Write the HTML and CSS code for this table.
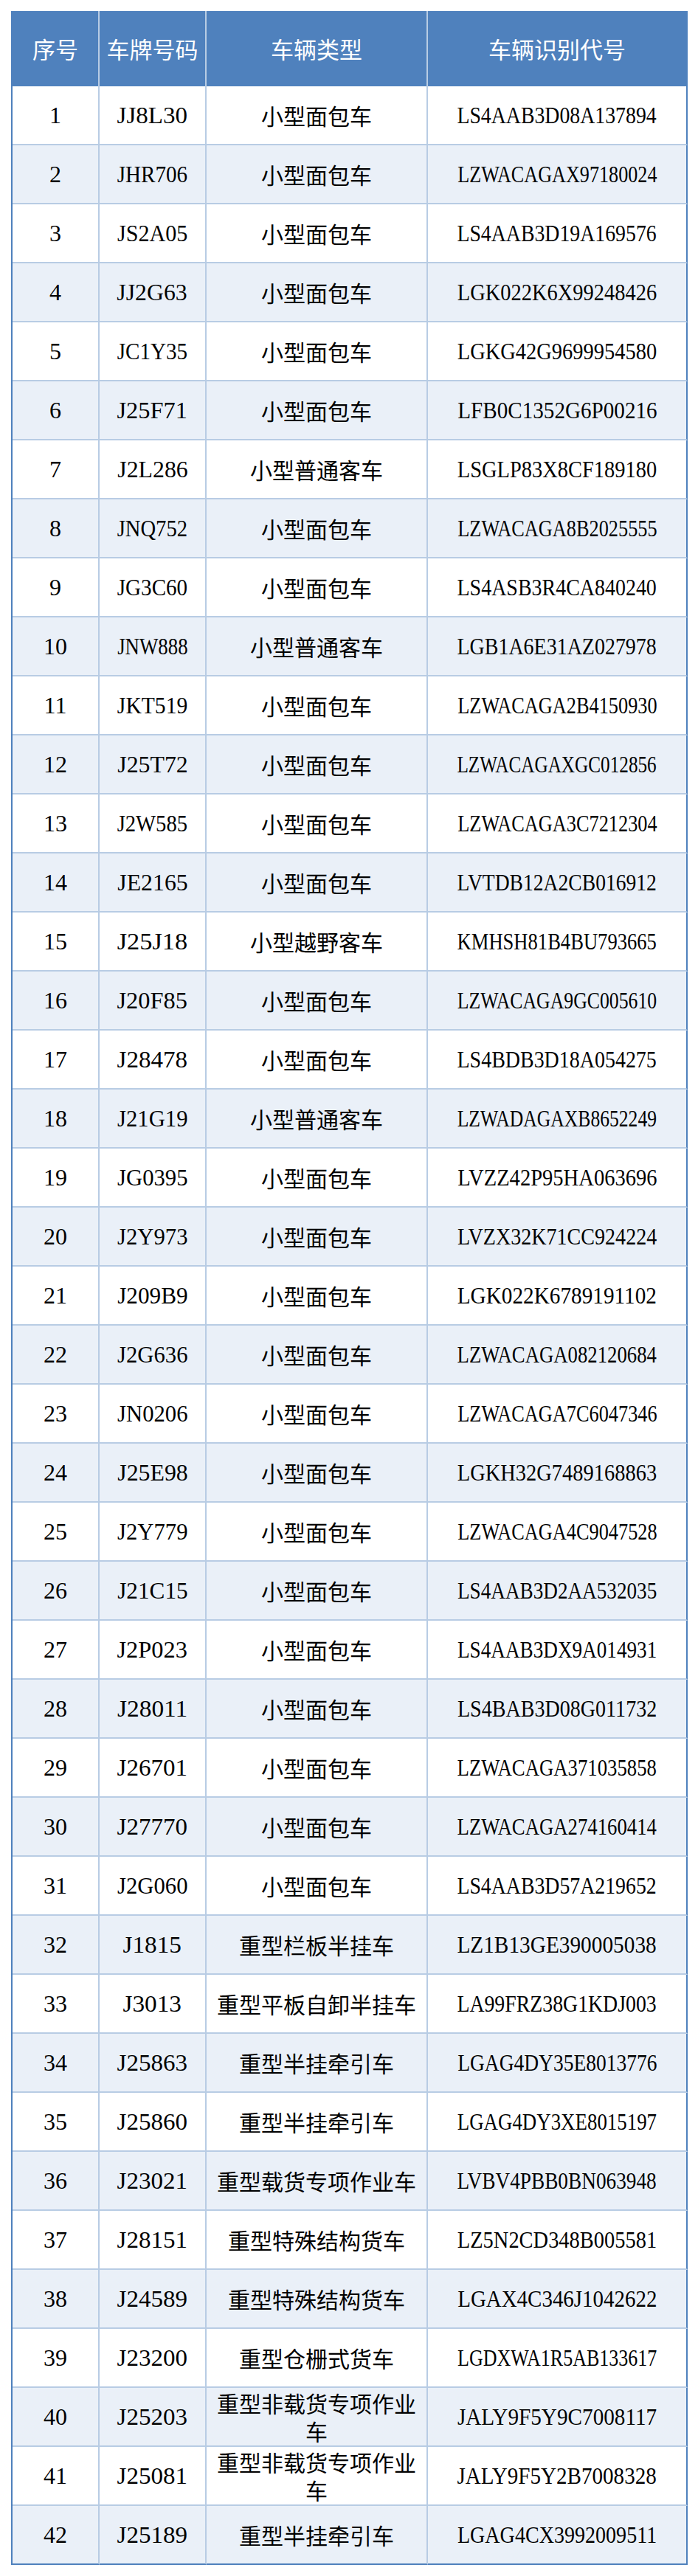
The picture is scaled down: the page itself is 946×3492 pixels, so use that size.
FILE: index.html
```html
<!DOCTYPE html>
<html lang="zh-CN">
<head>
<meta charset="utf-8">
<title>车辆信息表</title>
<link rel="stylesheet" href="styles.css">
</head>
<body>
<table class="vt">
<colgroup><col class="c1"><col class="c2"><col class="c3"><col class="c4"></colgroup>
<thead>
<tr><th>序号</th><th>车牌号码</th><th>车辆类型</th><th>车辆识别代号</th></tr>
</thead>
<tbody>
<tr><td class="n">1</td><td class="n"><span class="fit">JJ8L30</span></td><td class="t">小型面包车</td><td class="n"><span class="fit">LS4AAB3D08A137894</span></td></tr>
<tr><td class="n">2</td><td class="n"><span class="fit">JHR706</span></td><td class="t">小型面包车</td><td class="n"><span class="fit">LZWACAGAX97180024</span></td></tr>
<tr><td class="n">3</td><td class="n"><span class="fit">JS2A05</span></td><td class="t">小型面包车</td><td class="n"><span class="fit">LS4AAB3D19A169576</span></td></tr>
<tr><td class="n">4</td><td class="n"><span class="fit">JJ2G63</span></td><td class="t">小型面包车</td><td class="n"><span class="fit">LGK022K6X99248426</span></td></tr>
<tr><td class="n">5</td><td class="n"><span class="fit">JC1Y35</span></td><td class="t">小型面包车</td><td class="n"><span class="fit">LGKG42G9699954580</span></td></tr>
<tr><td class="n">6</td><td class="n"><span class="fit">J25F71</span></td><td class="t">小型面包车</td><td class="n"><span class="fit">LFB0C1352G6P00216</span></td></tr>
<tr><td class="n">7</td><td class="n"><span class="fit">J2L286</span></td><td class="t">小型普通客车</td><td class="n"><span class="fit">LSGLP83X8CF189180</span></td></tr>
<tr><td class="n">8</td><td class="n"><span class="fit">JNQ752</span></td><td class="t">小型面包车</td><td class="n"><span class="fit">LZWACAGA8B2025555</span></td></tr>
<tr><td class="n">9</td><td class="n"><span class="fit">JG3C60</span></td><td class="t">小型面包车</td><td class="n"><span class="fit">LS4ASB3R4CA840240</span></td></tr>
<tr><td class="n">10</td><td class="n"><span class="fit">JNW888</span></td><td class="t">小型普通客车</td><td class="n"><span class="fit">LGB1A6E31AZ027978</span></td></tr>
<tr><td class="n">11</td><td class="n"><span class="fit">JKT519</span></td><td class="t">小型面包车</td><td class="n"><span class="fit">LZWACAGA2B4150930</span></td></tr>
<tr><td class="n">12</td><td class="n"><span class="fit">J25T72</span></td><td class="t">小型面包车</td><td class="n"><span class="fit">LZWACAGAXGC012856</span></td></tr>
<tr><td class="n">13</td><td class="n"><span class="fit">J2W585</span></td><td class="t">小型面包车</td><td class="n"><span class="fit">LZWACAGA3C7212304</span></td></tr>
<tr><td class="n">14</td><td class="n"><span class="fit">JE2165</span></td><td class="t">小型面包车</td><td class="n"><span class="fit">LVTDB12A2CB016912</span></td></tr>
<tr><td class="n">15</td><td class="n"><span class="fit">J25J18</span></td><td class="t">小型越野客车</td><td class="n"><span class="fit">KMHSH81B4BU793665</span></td></tr>
<tr><td class="n">16</td><td class="n"><span class="fit">J20F85</span></td><td class="t">小型面包车</td><td class="n"><span class="fit">LZWACAGA9GC005610</span></td></tr>
<tr><td class="n">17</td><td class="n"><span class="fit">J28478</span></td><td class="t">小型面包车</td><td class="n"><span class="fit">LS4BDB3D18A054275</span></td></tr>
<tr><td class="n">18</td><td class="n"><span class="fit">J21G19</span></td><td class="t">小型普通客车</td><td class="n"><span class="fit">LZWADAGAXB8652249</span></td></tr>
<tr><td class="n">19</td><td class="n"><span class="fit">JG0395</span></td><td class="t">小型面包车</td><td class="n"><span class="fit">LVZZ42P95HA063696</span></td></tr>
<tr><td class="n">20</td><td class="n"><span class="fit">J2Y973</span></td><td class="t">小型面包车</td><td class="n"><span class="fit">LVZX32K71CC924224</span></td></tr>
<tr><td class="n">21</td><td class="n"><span class="fit">J209B9</span></td><td class="t">小型面包车</td><td class="n"><span class="fit">LGK022K6789191102</span></td></tr>
<tr><td class="n">22</td><td class="n"><span class="fit">J2G636</span></td><td class="t">小型面包车</td><td class="n"><span class="fit">LZWACAGA082120684</span></td></tr>
<tr><td class="n">23</td><td class="n"><span class="fit">JN0206</span></td><td class="t">小型面包车</td><td class="n"><span class="fit">LZWACAGA7C6047346</span></td></tr>
<tr><td class="n">24</td><td class="n"><span class="fit">J25E98</span></td><td class="t">小型面包车</td><td class="n"><span class="fit">LGKH32G7489168863</span></td></tr>
<tr><td class="n">25</td><td class="n"><span class="fit">J2Y779</span></td><td class="t">小型面包车</td><td class="n"><span class="fit">LZWACAGA4C9047528</span></td></tr>
<tr><td class="n">26</td><td class="n"><span class="fit">J21C15</span></td><td class="t">小型面包车</td><td class="n"><span class="fit">LS4AAB3D2AA532035</span></td></tr>
<tr><td class="n">27</td><td class="n"><span class="fit">J2P023</span></td><td class="t">小型面包车</td><td class="n"><span class="fit">LS4AAB3DX9A014931</span></td></tr>
<tr><td class="n">28</td><td class="n"><span class="fit">J28011</span></td><td class="t">小型面包车</td><td class="n"><span class="fit">LS4BAB3D08G011732</span></td></tr>
<tr><td class="n">29</td><td class="n"><span class="fit">J26701</span></td><td class="t">小型面包车</td><td class="n"><span class="fit">LZWACAGA371035858</span></td></tr>
<tr><td class="n">30</td><td class="n"><span class="fit">J27770</span></td><td class="t">小型面包车</td><td class="n"><span class="fit">LZWACAGA274160414</span></td></tr>
<tr><td class="n">31</td><td class="n"><span class="fit">J2G060</span></td><td class="t">小型面包车</td><td class="n"><span class="fit">LS4AAB3D57A219652</span></td></tr>
<tr><td class="n">32</td><td class="n"><span class="fit">J1815</span></td><td class="t">重型栏板半挂车</td><td class="n"><span class="fit">LZ1B13GE390005038</span></td></tr>
<tr><td class="n">33</td><td class="n"><span class="fit">J3013</span></td><td class="t">重型平板自卸半挂车</td><td class="n"><span class="fit">LA99FRZ38G1KDJ003</span></td></tr>
<tr><td class="n">34</td><td class="n"><span class="fit">J25863</span></td><td class="t">重型半挂牵引车</td><td class="n"><span class="fit">LGAG4DY35E8013776</span></td></tr>
<tr><td class="n">35</td><td class="n"><span class="fit">J25860</span></td><td class="t">重型半挂牵引车</td><td class="n"><span class="fit">LGAG4DY3XE8015197</span></td></tr>
<tr><td class="n">36</td><td class="n"><span class="fit">J23021</span></td><td class="t">重型载货专项作业车</td><td class="n"><span class="fit">LVBV4PBB0BN063948</span></td></tr>
<tr><td class="n">37</td><td class="n"><span class="fit">J28151</span></td><td class="t">重型特殊结构货车</td><td class="n"><span class="fit">LZ5N2CD348B005581</span></td></tr>
<tr><td class="n">38</td><td class="n"><span class="fit">J24589</span></td><td class="t">重型特殊结构货车</td><td class="n"><span class="fit">LGAX4C346J1042622</span></td></tr>
<tr><td class="n">39</td><td class="n"><span class="fit">J23200</span></td><td class="t">重型仓栅式货车</td><td class="n"><span class="fit">LGDXWA1R5AB133617</span></td></tr>
<tr><td class="n">40</td><td class="n"><span class="fit">J25203</span></td><td class="t">重型非载货专项作业车</td><td class="n"><span class="fit">JALY9F5Y9C7008117</span></td></tr>
<tr><td class="n">41</td><td class="n"><span class="fit">J25081</span></td><td class="t">重型非载货专项作业车</td><td class="n"><span class="fit">JALY9F5Y2B7008328</span></td></tr>
<tr><td class="n">42</td><td class="n"><span class="fit">J25189</span></td><td class="t">重型半挂牵引车</td><td class="n"><span class="fit">LGAG4CX3992009511</span></td></tr>
</tbody>
</table>
<script src="script.js"></script>
</body>
</html>
```

FILE: styles.css
```css
html, body {
  margin: 0;
  padding: 0;
  background: #ffffff;
}

body {
  padding: 15px 0 0 15px;
  font-family: "Liberation Serif", "Noto Sans CJK SC", serif;
  color: #000000;
}

.vt {
  border-collapse: separate;
  border-spacing: 0;
  table-layout: fixed;
  width: 915px;
  border-left: 2px solid #4f81bd;
}

.c1 { width: 118px; }
.c2 { width: 145px; }
.c3 { width: 300px; }
.c4 { width: 352px; }

.vt th,
.vt td {
  padding: 0 10px;
  text-align: center;
  vertical-align: middle;
  border-right: 2px solid #b8cce4;
  border-bottom: 2px solid #b8cce4;
  line-height: 38px;
}

.vt th:last-child,
.vt td:last-child {
  border-right-color: #4f81bd;
}

.vt th {
  height: 102px;
  padding: 0;
  background: #4f81bd;
  color: #ffffff;
  font-family: "Noto Sans CJK SC", sans-serif;
  font-weight: normal;
  font-size: 31px;
  white-space: nowrap;
  border-bottom: 0;
}

.vt td {
  height: 78px;
}

.vt tbody tr:nth-child(even) td {
  background: #eaf0f8;
}

.vt tbody tr:last-child td {
  border-bottom-color: #4f81bd;
}

.vt td.n {
  padding: 0;
  font-family: "Liberation Serif", serif;
  font-size: 32px;
  white-space: nowrap;
}

.t {
  font-family: "Noto Sans CJK SC", sans-serif;
  font-size: 30px;
}

.fit {
  display: inline-block;
  white-space: nowrap;
  transform-origin: 50% 50%;
}
```

FILE: script.js
```js
document.querySelectorAll('.fit').forEach(function (el) {
  var natural = el.getBoundingClientRect().width;
  var target = el.textContent.length * 15.9;
  if (natural > 0) {
    el.style.transform = 'scaleX(' + (target / natural).toFixed(4) + ')';
  }
});
```
